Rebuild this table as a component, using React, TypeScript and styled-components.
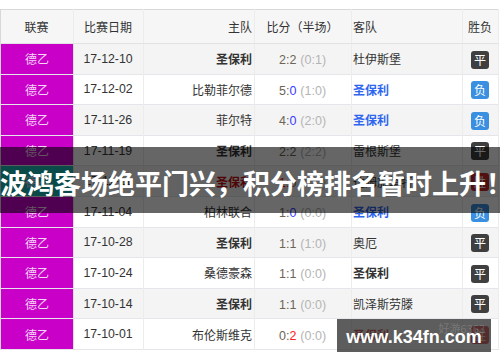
import * as React from 'react';
import styled, { createGlobalStyle } from 'styled-components';

const GlobalStyle = createGlobalStyle`
  html, body {
    margin: 0;
    padding: 0;
    background: #ffffff;
  }
  body {
    font-family: "Noto Sans CJK SC", "Liberation Sans", sans-serif;
  }
`;

type Outcome = 'draw' | 'win' | 'loss';

interface Match {
  date: string;
  home: string;
  away: string;
  homeScore: string;
  awayScore: string;
  half: string;
  // which side is 圣保利 and how to paint it
  homeStyle?: 'bold' | 'blue' | 'red';
  awayStyle?: 'bold' | 'blue' | 'red';
  awayScoreColor?: string;
  outcome: Outcome;
  leagueColor?: string;
}

const matches: Match[] = [
  { date: '17-12-10', home: '圣保利', away: '杜伊斯堡', homeScore: '2:', awayScore: '2', half: '(0:1)', homeStyle: 'bold', outcome: 'draw' },
  { date: '17-12-02', home: '比勒菲尔德', away: '圣保利', homeScore: '5:', awayScore: '0', half: '(1:0)', awayStyle: 'blue', awayScoreColor: '#3a3aff', outcome: 'loss' },
  { date: '17-11-26', home: '菲尔特', away: '圣保利', homeScore: '4:', awayScore: '0', half: '(2:0)', awayStyle: 'blue', awayScoreColor: '#3a3aff', outcome: 'loss' },
  { date: '17-11-19', home: '圣保利', away: '雷根斯堡', homeScore: '2:', awayScore: '2', half: '(2:2)', homeStyle: 'bold', outcome: 'draw' },
  { date: '17-11-11', home: '圣保利', away: '达姆施塔特', homeScore: '1:', awayScore: '0', half: '(0:0)', homeStyle: 'red', outcome: 'win', leagueColor: '#1ab8b4' },
  { date: '17-11-04', home: '柏林联合', away: '圣保利', homeScore: '1:', awayScore: '0', half: '(0:0)', awayStyle: 'blue', awayScoreColor: '#3a3aff', outcome: 'loss' },
  { date: '17-10-28', home: '圣保利', away: '奥厄', homeScore: '1:', awayScore: '1', half: '(1:0)', homeStyle: 'bold', outcome: 'draw' },
  { date: '17-10-24', home: '桑德豪森', away: '圣保利', homeScore: '1:', awayScore: '1', half: '(0:0)', awayStyle: 'bold', outcome: 'draw' },
  { date: '17-10-14', home: '圣保利', away: '凯泽斯劳滕', homeScore: '1:', awayScore: '1', half: '(0:0)', homeStyle: 'bold', outcome: 'draw' },
  { date: '17-10-01', home: '布伦斯维克', away: '圣保利', homeScore: '0:', awayScore: '2', half: '(0:0)', awayStyle: 'red', awayScoreColor: '#ff2020', outcome: 'win' },
];

const outcomeLabel: Record<Outcome, string> = { draw: '平', win: '胜', loss: '负' };
const outcomeColor: Record<Outcome, string> = { draw: '#3f3f3f', win: '#c8282d', loss: '#3a8fe0' };
const teamColor = { bold: '#333333', blue: '#2f66f0', red: '#c81010' };

const Page = styled.div`
  position: relative;
  width: 500px;
  height: 362px;
  padding-top: 9px;
  box-sizing: border-box;
  overflow: hidden;
`;

const Table = styled.table`
  width: 499px;
  border-collapse: collapse;
  table-layout: fixed;
  border: 1px solid #d8d8d8;
  border-bottom-color: #c8c8c8;
  font-size: 12px;
  color: #333333;
`;

const HeadCell = styled.th<{ $align?: string }>`
  height: 33px;
  padding: 0 2px 0 1px;
  background: #f6f6f6;
  font-weight: normal;
  color: #333333;
  text-align: ${(p) => p.$align || 'center'};
  border-right: 1px solid #ececec;
  border-bottom: 1px solid #e2e2e2;
`;

const Row = styled.tr<{ $odd: boolean }>`
  height: 30.6px;
  background: ${(p) => (p.$odd ? '#f4f4f4' : '#ffffff')};
  border-bottom: 1px solid #e4e6ea;
`;

const Cell = styled.td<{ $align?: string }>`
  padding: 0 2px 0 1px;
  text-align: ${(p) => p.$align || 'center'};
  border-right: 1px solid #ececec;
  white-space: nowrap;
  overflow: hidden;
`;

const LeagueCell = styled.td<{ $bg?: string }>`
  background: ${(p) => p.$bg || '#c800c8'};
  color: #f6d6f6;
  text-align: center;
  border-right: 1px solid #e0e0e0;
`;

const DateCell = styled(Cell)`
  font-family: "Liberation Sans", sans-serif;
  font-size: 12.3px;
  color: #333333;
`;

const Team = styled.span<{ $kind?: 'bold' | 'blue' | 'red' }>`
  font-weight: ${(p) => (p.$kind ? 'bold' : 'normal')};
  color: ${(p) => (p.$kind ? teamColor[p.$kind] : '#333333')};
`;

const Score = styled.span`
  font-family: "Liberation Sans", sans-serif;
  font-size: 12.5px;
  color: #6e6456;
`;

const ScorePart = styled.span<{ $color?: string }>`
  color: ${(p) => p.$color || '#6e6456'};
`;

const Half = styled.span`
  color: #b4b4b4;
  margin-left: 4px;
`;

const Badge = styled.span<{ $outcome: Outcome }>`
  display: inline-flex;
  align-items: center;
  justify-content: center;
  width: 18px;
  height: 18px;
  border-radius: 3px;
  background: ${(p) => outcomeColor[p.$outcome]};
  color: #ffffff;
  font-size: 12px;
  line-height: 1;
  vertical-align: middle;
`;

const TitleBand = styled.div`
  position: absolute;
  left: 0;
  top: 147px;
  width: 500px;
  height: 66px;
  background: rgba(0, 0, 0, 0.6);
  display: flex;
  align-items: center;
  overflow: hidden;
`;

const Title = styled.h1`
  margin: 0;
  padding-top: 4px;
  font-family: "Noto Sans CJK SC", sans-serif;
  font-size: 27px;
  font-weight: bold;
  color: #ffffff;
  white-space: nowrap;
  letter-spacing: 0;
`;

const Watermark = styled.div`
  position: absolute;
  left: 337px;
  top: 319px;
  width: 154px;
  height: 33px;
  background: rgba(48, 48, 48, 0.78);
  display: flex;
  align-items: center;
  justify-content: center;
`;

const WatermarkFaint = styled.span`
  position: absolute;
  right: 6px;
  top: 1px;
  font-size: 11px;
  color: rgba(255, 255, 255, 0.18);
`;

const WatermarkText = styled.span`
  position: relative;
  margin-top: 4px;
  font-family: "Liberation Sans", sans-serif;
  font-size: 18px;
  font-weight: bold;
  color: #ffffff;
`;

export default function App() {
  return (
    <Page>
      <GlobalStyle />
      <Table>
        <colgroup>
          <col style={{ width: 73 }} />
          <col style={{ width: 70 }} />
          <col style={{ width: 111 }} />
          <col style={{ width: 97 }} />
          <col style={{ width: 111 }} />
          <col style={{ width: 36 }} />
        </colgroup>
        <thead>
          <tr>
            <HeadCell>联赛</HeadCell>
            <HeadCell>比赛日期</HeadCell>
            <HeadCell $align="right">主队</HeadCell>
            <HeadCell>比分（半场）</HeadCell>
            <HeadCell $align="left">客队</HeadCell>
            <HeadCell>胜负</HeadCell>
          </tr>
        </thead>
        <tbody>
          {matches.map((m, i) => (
            <Row key={m.date} $odd={i % 2 === 0}>
              <LeagueCell $bg={m.leagueColor}>德乙</LeagueCell>
              <DateCell>{m.date}</DateCell>
              <Cell $align="right">
                <Team $kind={m.homeStyle}>{m.home}</Team>
              </Cell>
              <Cell>
                <Score>
                  <ScorePart $color={m.homeStyle === 'red' ? '#e01a1a' : undefined}>{m.homeScore}</ScorePart>
                  <ScorePart $color={m.awayScoreColor}>{m.awayScore}</ScorePart>
                  <Half>{m.half}</Half>
                </Score>
              </Cell>
              <Cell $align="left">
                <Team $kind={m.awayStyle}>{m.away}</Team>
              </Cell>
              <Cell>
                <Badge $outcome={m.outcome}>{outcomeLabel[m.outcome]}</Badge>
              </Cell>
            </Row>
          ))}
        </tbody>
      </Table>
      <TitleBand>
        <Title>波鸿客场绝平门兴，积分榜排名暂时上升！</Title>
      </TitleBand>
      <Watermark>
        <WatermarkFaint>好游6363</WatermarkFaint>
        <WatermarkText>www.k34fn.com</WatermarkText>
      </Watermark>
    </Page>
  );
}
